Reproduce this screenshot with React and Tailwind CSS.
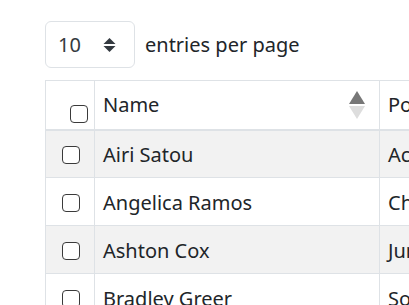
import React from "react";

const rows = [
  { name: "Airi Satou", position: "Accountant", office: "Tokyo" },
  { name: "Angelica Ramos", position: "Chief Executive Officer (CEO)", office: "London" },
  { name: "Ashton Cox", position: "Junior Technical Author", office: "San Francisco" },
  { name: "Bradley Greer", position: "Software Engineer", office: "London" },
];

const Box = () => (
  <input
    type="checkbox"
    className="block appearance-none w-[18px] h-[18px] rounded-[4px] border border-[#3a3a3a] bg-white"
  />
);

const SortIcon = () => (
  <svg width="16" height="28" viewBox="0 0 16 28" className="block">
    <polygon points="8,0 16,13 0,13" fill="#777" />
    <polygon points="8,28 16,15 0,15" fill="#ddd" />
  </svg>
);

export default function App() {
  return (
    <div
      className="w-[409px] h-[305px] overflow-hidden bg-white text-[#212529]"
      style={{ fontFamily: '"Noto Sans", sans-serif' }}
    >
      <div className="pl-[45px] pt-[21px]">
        <div className="flex items-center gap-[10px] h-[47px]">
          <div className="flex items-center justify-between w-[90px] h-[47px] rounded-[6px] border border-[#dee2e6] pl-[12px] pr-[18px] text-[20px] text-[#343a40]">
            <span>10</span>
            <svg width="13" height="16" viewBox="0 0 13 16">
              <polygon points="6.5,1 12.5,7 0.5,7" fill="#343a40" />
              <polygon points="6.5,15 12.5,9 0.5,9" fill="#343a40" />
            </svg>
          </div>
          <span className="text-[20px]">entries per page</span>
        </div>

        <table className="mt-[12px] border-collapse text-[20px] whitespace-nowrap">
          <thead>
            <tr className="h-[49px]">
              <th className="w-[49px] min-w-[49px] border border-[#dee2e6] border-b-2 border-b-[#dee2e6] align-bottom pb-[6px] pl-[24px] font-normal">
                <Box />
              </th>
              <th className="w-[285px] min-w-[285px] border border-[#dee2e6] border-b-2 border-b-[#dee2e6] pl-[8px] pr-[14px] text-left font-normal">
                <div className="flex items-center justify-between">
                  <span>Name</span>
                  <SortIcon />
                </div>
              </th>
              <th className="border border-[#dee2e6] border-b-2 border-b-[#dee2e6] pl-[8px] pr-[40px] text-left font-normal">
                Position
              </th>
              <th className="border border-[#dee2e6] border-b-2 border-b-[#dee2e6] px-[8px] text-left font-normal">
                Office
              </th>
            </tr>
          </thead>
          <tbody>
            {rows.map((r, i) => (
              <tr key={r.name} className={`h-[48px] ${i % 2 === 0 ? "bg-[#f2f2f2]" : "bg-white"}`}>
                <td className="border border-[#dee2e6] pl-[16px] pt-[2px]">
                  <Box />
                </td>
                <td className="border border-[#dee2e6] pl-[8px] pt-[2px]">{r.name}</td>
                <td className="border border-[#dee2e6] pl-[8px] pr-[40px] pt-[2px]">{r.position}</td>
                <td className="border border-[#dee2e6] px-[8px] pt-[2px]">{r.office}</td>
              </tr>
            ))}
          </tbody>
        </table>
      </div>
    </div>
  );
}
